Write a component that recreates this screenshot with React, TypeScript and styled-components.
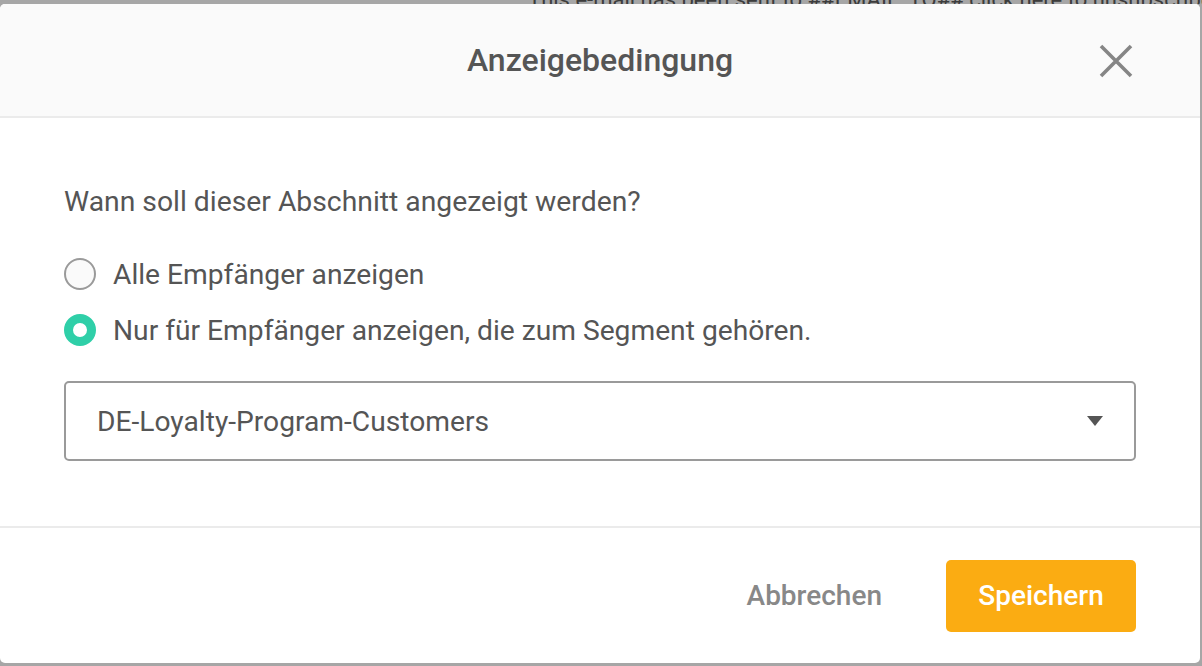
import { useState } from 'react';
import styled, { createGlobalStyle } from 'styled-components';

const SEGMENTS = ['DE-Loyalty-Program-Customers'];

const App = () => {
  const [mode, setMode] = useState<'all' | 'segment'>('segment');
  const [segment] = useState(SEGMENTS[0]);

  return (
    <>
      <GlobalStyle />
      <Page>
        <PageStrip>
          <span>This e-mail has been sent to ##EMAIL_TO## click here to unsubscribe</span>
        </PageStrip>
        <Modal>
          <Header>
            <Title>Anzeigebedingung</Title>
            <CloseButton aria-label="Schließen">
              <svg width="34" height="34" viewBox="0 0 34 34">
                <path d="M2 2 L32 32 M32 2 L2 32" stroke="#858585" strokeWidth="3.6" strokeLinecap="butt" />
              </svg>
            </CloseButton>
          </Header>

          <Body>
            <Question>Wann soll dieser Abschnitt angezeigt werden?</Question>

            <RadioGroup>
              <RadioLabel onClick={() => setMode('all')}>
                <RadioDot checked={mode === 'all'} />
                <span>Alle Empfänger anzeigen</span>
              </RadioLabel>
              <RadioLabel onClick={() => setMode('segment')}>
                <RadioDot checked={mode === 'segment'} />
                <span>Nur für Empfänger anzeigen, die zum Segment gehören.</span>
              </RadioLabel>
            </RadioGroup>

            <Select>
              <span>{segment}</span>
              <svg width="16" height="10" viewBox="0 0 16 10">
                <path d="M0 0 H16 L8 10 Z" fill="#555" />
              </svg>
            </Select>
          </Body>

          <Footer>
            <CancelButton>Abbrechen</CancelButton>
            <SaveButton>Speichern</SaveButton>
          </Footer>
        </Modal>
      </Page>
    </>
  );
};

export default App;

/* ================= STYLES ================= */

const GlobalStyle = createGlobalStyle`
  html, body {
    margin: 0;
    padding: 0;
    background: #a6a6a6;
    overflow: hidden;
  }
  * {
    box-sizing: border-box;
  }
  body {
    font-family: Roboto, "Liberation Sans", sans-serif;
  }
`;

const Page = styled.div`
  width: 1202px;
  height: 666px;
  display: flex;
  flex-direction: column;
`;

const PageStrip = styled.div`
  height: 4px;
  overflow: hidden;
  padding-left: 528px;
  white-space: nowrap;
  font-size: 22px;
  color: #3c3c3c;
  line-height: 12px;

  span {
    display: block;
    margin-top: -6px;
  }
`;

const Modal = styled.div`
  width: 1200px;
  height: 659px;
  background: #fff;
  border-radius: 5px;
  display: flex;
  flex-direction: column;
  overflow: hidden;
`;

const Header = styled.div`
  position: relative;
  height: 114px;
  flex-shrink: 0;
  background: #fafafa;
  border-bottom: 2px solid #ebebeb;
  display: flex;
  align-items: center;
  justify-content: center;
`;

const Title = styled.h2`
  margin: 0;
  font-size: 32px;
  font-weight: 500;
  color: #555;
`;

const CloseButton = styled.button`
  position: absolute;
  right: 67px;
  top: 40px;
  width: 34px;
  height: 34px;
  padding: 0;
  border: 0;
  background: none;
  cursor: pointer;
  display: flex;
`;

const Body = styled.div`
  flex: 1;
  padding: 66px 64px 0;
  display: flex;
  flex-direction: column;
`;

const Question = styled.p`
  margin: 0;
  font-size: 28.3px;
  line-height: 36px;
  color: #555;
`;

const RadioGroup = styled.div`
  margin-top: 36px;
  display: flex;
  flex-direction: column;
  gap: 20px;
`;

const RadioLabel = styled.label`
  display: flex;
  align-items: center;
  gap: 17px;
  height: 36px;
  font-size: 28.2px;
  color: #555;
  cursor: pointer;
`;

const RadioDot = styled.span<{ checked: boolean }>`
  width: 32px;
  height: 32px;
  border-radius: 50%;
  flex-shrink: 0;
  background: ${(p) => (p.checked ? '#fff' : '#fafafa')};
  border: ${(p) => (p.checked ? '9px solid #2fcfa8' : '2px solid #9a9a9a')};
`;

const Select = styled.div`
  margin-top: 33px;
  height: 80px;
  border: 2px solid #9a9a9a;
  border-radius: 5px;
  padding: 0 31px 0 31px;
  display: flex;
  align-items: center;
  justify-content: space-between;
  font-size: 28.2px;
  color: #555;
`;

const Footer = styled.div`
  height: 137px;
  flex-shrink: 0;
  border-top: 2px solid #ebebeb;
  display: flex;
  align-items: center;
  justify-content: flex-end;
  padding: 0 64px 0 0;
  gap: 64px;
`;

const CancelButton = styled.button`
  border: 0;
  background: none;
  padding: 0;
  font-family: inherit;
  font-size: 28px;
  font-weight: 500;
  color: #888;
  cursor: pointer;
`;

const SaveButton = styled.button`
  width: 190px;
  height: 72px;
  border: 0;
  border-radius: 5px;
  background: #fbac12;
  color: #fff;
  font-family: inherit;
  font-size: 28px;
  font-weight: 500;
  cursor: pointer;
`;
